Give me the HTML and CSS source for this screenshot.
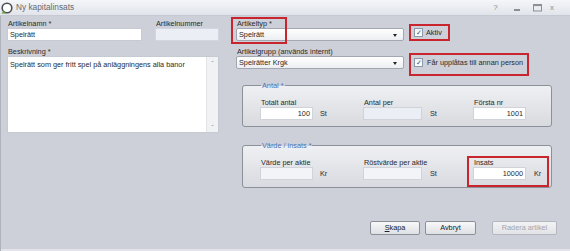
FILE: index.html
```html
<!DOCTYPE html>
<html lang="sv">
<head>
<meta charset="utf-8">
<title>Ny kapitalinsats</title>
<link rel="stylesheet" href="styles.css">
</head>
<body>
<div class="window">
  <div class="titlebar">
    <svg class="appicon" width="12" height="12" viewBox="0 0 12 12">
      <circle cx="6" cy="6" r="4.8" fill="#fff" stroke="#4a4d52" stroke-width="1.6"/>
      <path d="M0.5 11.5 L3 8.5 L5 11.5 Z" fill="#5d9c3a"/>
    </svg>
    <span class="title">Ny kapitalinsats</span>
    <div class="controls">
      <span class="ctl c-help">?</span>
      <span class="ctl c-min"><svg width="7" height="7" viewBox="0 0 7 7"><rect x="0" y="5" width="6" height="2" fill="#8b9098"/></svg></span>
      <span class="ctl c-max"><svg width="9" height="8" viewBox="0 0 9 8"><rect x="0.5" y="0.5" width="8" height="6.5" fill="none" stroke="#8b9098"/><rect x="0.5" y="0.5" width="8" height="1.6" fill="#8b9098"/></svg></span>
      <span class="ctl c-close">x</span>
    </div>
  </div>

  <div class="main">
    <div class="left">
      <div class="row">
        <div class="field w-name">
          <label>Artikelnamn *</label>
          <div class="input">Spelrätt</div>
        </div>
        <div class="field w-num">
          <label>Artikelnummer</label>
          <div class="input input-blank"></div>
        </div>
      </div>
      <div class="field desc">
        <label>Beskrivning *</label>
        <div class="textarea">
          <div class="ta-text">Spelrätt som ger fritt spel på anläggningens alla banor</div>
          <div class="ta-scroll"><span>&#710;</span><span>&#711;</span></div>
        </div>
      </div>
    </div>

    <div class="right">
      <div class="row row-top">
        <div class="field w-sel">
          <label>Artikeltyp *</label>
          <div class="select">Spelrätt<span class="arrow"></span></div>
        </div>
        <div class="check check-a"><span class="box">&#10003;</span>Aktiv</div>
      </div>
      <div class="row row-second">
        <div class="field w-sel">
          <label>Artikelgrupp (används internt)</label>
          <div class="select sel-grp">Spelrätter Krgk<span class="arrow"></span></div>
        </div>
        <div class="check check-b"><span class="box">&#10003;</span>Får upplåtas till annan person</div>
      </div>

      <fieldset class="group g-antal">
        <legend>Antal *</legend>
        <div class="ggrid">
          <div class="gfield">
            <label>Totalt antal</label>
            <div class="gin"><div class="input num">100</div><span class="unit">St</span></div>
          </div>
          <div class="gfield">
            <label>Antal per</label>
            <div class="gin"><div class="input num wide input-blank"></div><span class="unit">St</span></div>
          </div>
          <div class="gfield">
            <label>Första nr</label>
            <div class="gin"><div class="input num">1001</div></div>
          </div>
        </div>
      </fieldset>

      <fieldset class="group g-value">
        <legend>Värde / insats *</legend>
        <div class="ggrid">
          <div class="gfield">
            <label>Värde per aktie</label>
            <div class="gin"><div class="input num input-blank2"></div><span class="unit">Kr</span></div>
          </div>
          <div class="gfield">
            <label>Röstvärde per aktie</label>
            <div class="gin"><div class="input num wide input-blank2"></div><span class="unit">St</span></div>
          </div>
          <div class="gfield">
            <label>Insats</label>
            <div class="gin"><div class="input num">10000</div><span class="unit">Kr</span></div>
          </div>
        </div>
      </fieldset>
    </div>
  </div>

  <div class="buttons">
    <button class="btn b-create"><u>S</u>kapa</button>
    <button class="btn b-cancel">Avbryt</button>
    <button class="btn b-delete" disabled>Radera artikel</button>
  </div>

  <div class="mark mark-type"></div>
  <div class="mark mark-aktiv"></div>
  <div class="mark mark-upp"></div>
  <div class="mark mark-insats"></div>
</div>
</body>
</html>
```

FILE: styles.css
```css
* { box-sizing: border-box; margin: 0; padding: 0; }

body {
  margin: 0;
  background: #cdd0d9;
}

.window {
  width: 570px;
  height: 251px;
  position: relative;
  overflow: hidden;
  display: flex;
  flex-direction: column;
  background: #cdd0d9;
  box-shadow: inset 1px 0 0 #aeb2bb, inset 0 -2px 0 #e2e4e9;
  font: 7.3px/9px "Liberation Sans", Arial, sans-serif;
  color: #2a2a2a;
}

/* title bar */
.titlebar {
  height: 16px;
  flex: none;
  display: flex;
  align-items: center;
  padding-left: 1px;
  background: linear-gradient(#f4f6f9, #e1e4ea);
  border-bottom: 1px solid #c6c9d1;
}
.appicon { flex: none; }
.title {
  margin-left: 3px;
  font-size: 8.3px;
  color: #666b73;
}
.controls {
  margin-left: auto;
  display: flex;
  align-items: center;
  padding-right: 12px;
  color: #8b9098;
  font-size: 8px;
}
.ctl { display: flex; justify-content: center; align-items: center; }
.c-help { width: 23px; }
.c-min { width: 21px; }
.c-max { width: 18px; }
.c-close { width: 12px; }

/* main area */
.main {
  display: flex;
  gap: 17px;
  padding: 3px 0 0 7px;
}
.left { width: 212px; display: flex; flex-direction: column; }
.right { width: 316px; display: flex; flex-direction: column; }

.row { display: flex; }
.left .row { gap: 13px; }

.field label {
  display: block;
  height: 9px;
  padding-left: 1px;
  white-space: nowrap;
}
.w-name { width: 135px; }
.w-num { width: 64px; }
.w-sel { width: 168px; }

.input {
  height: 13px;
  background: #fff;
  border: 1px solid #c6cad3;
  padding: 0 2px;
  line-height: 11px;
  white-space: nowrap;
}
.input-blank { background: #eceef6; border-color: #d3d6df; }
.input-blank2 { background: #f3f4f8; border-color: #d3d6df; }

.desc { margin-top: 6px; }
.textarea {
  height: 77px;
  background: #fff;
  border: 1px solid #c6cad3;
  display: flex;
}
.ta-text {
  flex: 1;
  padding: 3px 2px;
}
.ta-scroll {
  width: 12px;
  background: #f1f2f4;
  border-left: 1px solid #e2e4e8;
  display: flex;
  flex-direction: column;
  justify-content: space-between;
  align-items: center;
  color: #8a8e96;
  font-size: 7px;
  line-height: 8px;
  padding: 3px 0 0;
}

/* selects */
.select {
  height: 13px;
  position: relative;
  border: 1px solid #a2a7b1;
  border-radius: 2px;
  background: linear-gradient(#ffffff, #eceef2);
  padding: 0 2px;
  line-height: 11px;
}
.arrow {
  position: absolute;
  right: 6px;
  top: 5px;
  width: 0;
  height: 0;
  border-left: 2.5px solid transparent;
  border-right: 2.5px solid transparent;
  border-top: 3px solid #222;
}

.row-top { align-items: flex-end; }
.row-second { margin-top: 6px; align-items: flex-end; }

.check {
  display: flex;
  align-items: center;
  gap: 3px;
  margin-left: 10px;
  white-space: nowrap;
}
.check-a { margin-bottom: 4px; }
.check-b { margin-bottom: 2px; gap: 4px; }
.box {
  width: 9px;
  height: 9px;
  border: 1px solid #8b98a8;
  background: linear-gradient(#eef1f5, #ffffff);
  color: #2b4f8c;
  font-size: 7px;
  line-height: 7px;
  text-align: center;
}

/* group boxes */
.group {
  margin-left: 6px;
  width: 310px;
  border: 1px solid #8c9099;
  border-radius: 3px;
  background: linear-gradient(#eff0f3, #d8dadf);
  padding: 8px 0 6px 17px;
}
.g-antal { margin-top: 12px; }
.g-value { margin-top: 14px; padding-bottom: 7px; }
.group legend {
  margin-left: 1px;
  padding: 0 1px;
  color: #4a74b8;
  font-size: 7.3px;
  line-height: 9px;
}
.ggrid {
  display: grid;
  grid-template-columns: 103px 110px auto;
}
.gfield label { display: block; height: 9px; padding-left: 1px; white-space: nowrap; }
.gin { display: flex; align-items: center; }
.input.num { width: 53px; text-align: right; border-color: #d0d3da; }
.input.num.wide { width: 59px; }
.unit { margin-left: 7px; }
.gfield:nth-child(2) .unit { margin-left: 8px; }
.gfield:nth-child(3) .unit { margin-left: 8px; }

/* buttons */
.buttons {
  display: flex;
  justify-content: flex-end;
  padding-right: 13px;
  margin-top: 33px;
  gap: 5px;
}
.btn {
  height: 14px;
  border: 1px solid #8b8f97;
  border-radius: 2px;
  background: linear-gradient(#f8f8f9, #dfe0e4);
  font: 7.3px/12px "Liberation Sans", Arial, sans-serif;
  color: #222;
}
.b-create { width: 50px; }
.b-cancel { width: 51px; }
.b-delete {
  width: 65px;
  margin-left: 11px;
  color: #a3a6ac;
  border-color: #b4b7be;
  background: linear-gradient(#f2f3f5, #e2e3e7);
}

/* red annotation marks over the form */
.mark {
  position: absolute;
  border: 2px solid #c9252e;
}
.mark-type { left: 231px; top: 17px; width: 56px; height: 27px; }
.mark-aktiv { left: 409px; top: 24px; width: 41px; height: 17px; }
.mark-upp { left: 409px; top: 53px; width: 120px; height: 23px; }
.mark-insats { left: 467px; top: 156px; width: 82px; height: 31px; }
```
